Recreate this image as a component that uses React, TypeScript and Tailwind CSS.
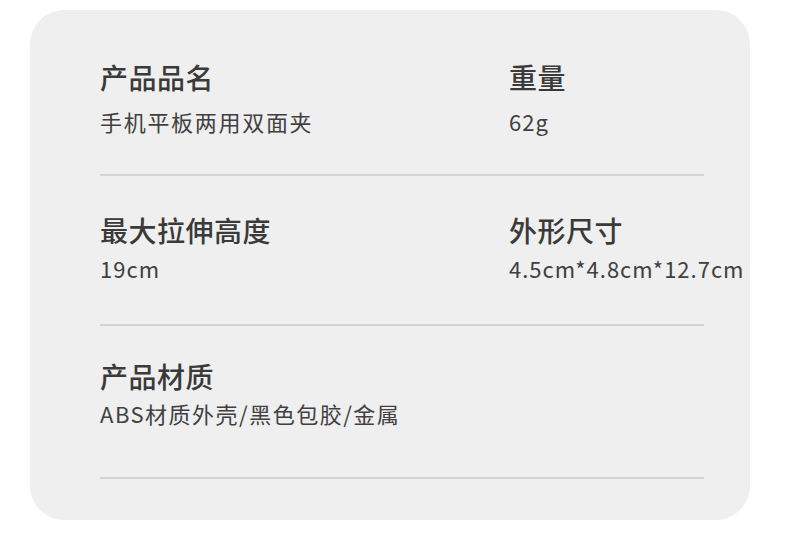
import React from "react";

const font = { fontFamily: '"Noto Sans CJK SC", "Noto Sans", sans-serif' };

function Cell({ title, value, gap, track }: { title: string; value: string; gap: string; track: string }) {
  return (
    <div className="flex flex-col">
      <div className="text-[28px] leading-[36px] font-medium text-[#3a3a3a] tracking-[0.5px]">{title}</div>
      <div className={`text-[22px] leading-[30px] text-[#404040] whitespace-nowrap ${track} ${gap}`}>{value}</div>
    </div>
  );
}

export default function App() {
  return (
    <div className="w-[790px] h-[536px] bg-white pt-[10px] pl-[30px]" style={font}>
      <div className="w-[720px] h-[510px] rounded-[34px] bg-[#efefef] pl-[70px] pt-[49px]">
        <div className="w-[604px]">
          <div className="grid grid-cols-[409px_1fr] pb-[38px]">
            <Cell title="产品品名" value="手机平板两用双面夹" gap="mt-[11px]" track="tracking-[1.7px]" />
            <Cell title="重量" value="62g" gap="mt-[11px]" track="tracking-[1px]" />
          </div>
          <div className="h-[2px] bg-[#d2d2d2]" />
          <div className="grid grid-cols-[409px_1fr] pt-[36px] pb-[41px]">
            <Cell title="最大拉伸高度" value="19cm" gap="mt-[5px]" track="tracking-[1px]" />
            <Cell title="外形尺寸" value="4.5cm*4.8cm*12.7cm" gap="mt-[5px]" track="tracking-[1px]" />
          </div>
          <div className="h-[2px] bg-[#d2d2d2]" />
          <div className="pt-[32px] pb-[49px]">
            <Cell title="产品材质" value="ABS材质外壳/黑色包胶/金属" gap="mt-[4px]" track="tracking-[1.5px]" />
          </div>
          <div className="h-[2px] bg-[#d2d2d2]" />
        </div>
      </div>
    </div>
  );
}
